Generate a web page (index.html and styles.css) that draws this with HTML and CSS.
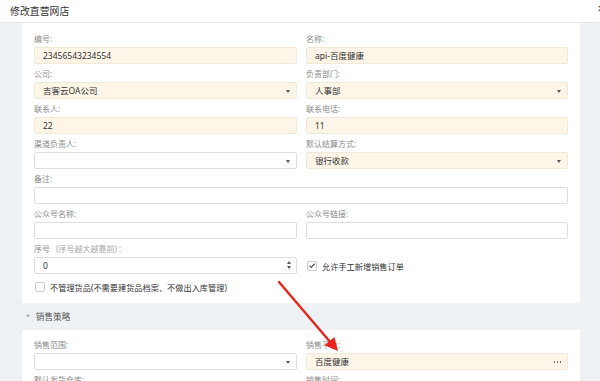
FILE: index.html
```html
<!DOCTYPE html>
<html lang="zh">
<head>
<meta charset="utf-8">
<link rel="stylesheet" href="styles.css">
</head>
<body>
<div class="dialog">
  <div class="header">
    <span class="title">修改直营网店</span>
    <span class="close">×</span>
  </div>
  <div class="body">
    <div class="card grid">
      <div class="field"><label>编号:</label><div class="input cream">23456543234554</div></div>
      <div class="field"><label>名称:</label><div class="input cream">api-百度健康</div></div>
      <div class="field"><label>公司:</label><div class="input cream select">吉客云OA公司<i class="caret"></i></div></div>
      <div class="field"><label>负责部门:</label><div class="input cream select">人事部<i class="caret"></i></div></div>
      <div class="field"><label>联系人:</label><div class="input cream">22</div></div>
      <div class="field"><label>联系电话:</label><div class="input cream">11</div></div>
      <div class="field"><label>渠道负责人:</label><div class="input select"><i class="caret"></i></div></div>
      <div class="field"><label>默认结算方式:</label><div class="input cream select">银行收款<i class="caret"></i></div></div>
      <div class="field full"><label>备注:</label><div class="input"></div></div>
      <div class="field"><label>公众号名称:</label><div class="input"></div></div>
      <div class="field"><label>公众号链接:</label><div class="input"></div></div>
      <div class="field"><label>序号 <span class="hint">(序号越大越靠前) :</span></label><div class="input number">0<span class="spin"><i class="up"></i><i class="down"></i></span></div></div>
      <div class="field check-cell"><div class="check-row"><span class="box checked"><svg viewBox="0 0 10 10" width="9" height="9"><path d="M2 5.2 L4.2 7.3 L8.2 2.8" fill="none" stroke="#4a5560" stroke-width="1.5"/></svg></span><span>允许手工新增销售订单</span></div></div>
      <div class="check-row full wide"><span class="box"></span><span>不管理货品(不需要建货品档案、不做出入库管理)</span></div>
    </div>
    <div class="section-title"><span class="dot">*</span>销售策略</div>
    <div class="card grid second">
      <div class="field"><label>销售范围:</label><div class="input select"><i class="caret"></i></div></div>
      <div class="field"><label>销售平台:</label><div class="input cream dots">百度健康<span class="more"><i></i><i></i><i></i></span></div></div>
      <div class="field"><label>默认发货仓库:</label><div class="input"></div></div>
      <div class="field"><label>销售时间:</label><div class="input"></div></div>
    </div>
  </div>
  <svg class="arrow" width="600" height="381" viewBox="0 0 600 381">
    <line x1="279" y1="282" x2="331" y2="343" stroke="#e8241b" stroke-width="2.4" stroke-linecap="round"/>
    <polygon points="338,351 324.6,345.3 334.4,336.9" fill="#e8241b"/>
  </svg>
</div>
</body>
</html>
```

FILE: styles.css
```css
* { box-sizing: border-box; }
html, body {
  margin: 0;
  padding: 0;
  width: 600px;
  height: 381px;
  overflow: hidden;
  background: #fff;
  font-family: "Noto Sans", "Noto Sans CJK SC", sans-serif;
  color: #333;
}
.dialog {
  position: relative;
  width: 600px;
  height: 381px;
  overflow: hidden;
}
.header {
  height: 23px;
  border-bottom: 1px solid #e8e8e8;
  display: flex;
  align-items: center;
  justify-content: space-between;
  padding: 0 0 0 10px;
}
.title {
  font-size: 9.8px;
  color: #333;
  letter-spacing: 0.1px;
}
.close {
  font-size: 13px;
  color: #333;
  margin-right: -5px;
  margin-top: -5px;
  line-height: 1;
}
.body {
  background: #eff2f5;
  padding: 0 20px 0 22px;
  height: 358px;
}
.card {
  background: #fff;
  padding: 8px 12px 5px 12px;
}
.grid {
  display: grid;
  grid-template-columns: 263px 262px;
  column-gap: 9px;
}
.field {
  display: flex;
  flex-direction: column;
  margin-bottom: 2px;
}
.full { grid-column: 1 / 3; }
label {
  height: 16px;
  line-height: 16px;
  font-size: 8px;
  color: #8a8a8a;
}
.hint { color: #aaa; margin-left: 4px; }
.input {
  height: 17px;
  border: 1px solid #dedede;
  border-radius: 2px;
  background: #fff;
  font-size: 8.5px;
  line-height: 15px;
  padding: 0 8px;
  color: #333;
  position: relative;
  display: flex;
  align-items: center;
}
.input.cream {
  background: #fdf5e7;
  border-color: #f2e9d8;
}
.caret {
  position: absolute;
  right: 6px;
  top: 7px;
  width: 0;
  height: 0;
  border-left: 2.5px solid transparent;
  border-right: 2.5px solid transparent;
  border-top: 3px solid #555;
}
.spin {
  position: absolute;
  right: 5px;
  top: 3px;
  display: flex;
  flex-direction: column;
  gap: 2px;
}
.spin .up {
  width: 0; height: 0;
  border-left: 2.5px solid transparent;
  border-right: 2.5px solid transparent;
  border-bottom: 3px solid #555;
}
.spin .down {
  width: 0; height: 0;
  border-left: 2.5px solid transparent;
  border-right: 2.5px solid transparent;
  border-top: 3px solid #555;
}
.more {
  position: absolute;
  right: 6px;
  top: 7px;
  display: flex;
  gap: 1.5px;
}
.more i {
  width: 1.5px;
  height: 1.5px;
  background: #555;
  border-radius: 50%;
}
.check-cell {
  padding-top: 16px;
}
.check-row {
  height: 17px;
  display: flex;
  align-items: center;
  font-size: 8.2px;
  color: #333;
  gap: 5px;
  padding-left: 1px;
}
.check-row.wide {
  height: 22px;
  padding-left: 1px;
}
.box {
  width: 10px;
  height: 10px;
  border: 1px solid #ccc;
  border-radius: 2px;
  background: #fff;
  display: inline-flex;
  align-items: center;
  justify-content: center;
}
.section-title {
  height: 27px;
  display: flex;
  align-items: center;
  font-size: 8.6px;
  color: #555;
  padding-left: 4px;
}
.dot {
  color: #999;
  font-size: 7px;
  margin-right: 6px;
}
.second {
  padding-top: 7px;
}
.arrow {
  position: absolute;
  left: 0;
  top: 0;
  pointer-events: none;
}
```
